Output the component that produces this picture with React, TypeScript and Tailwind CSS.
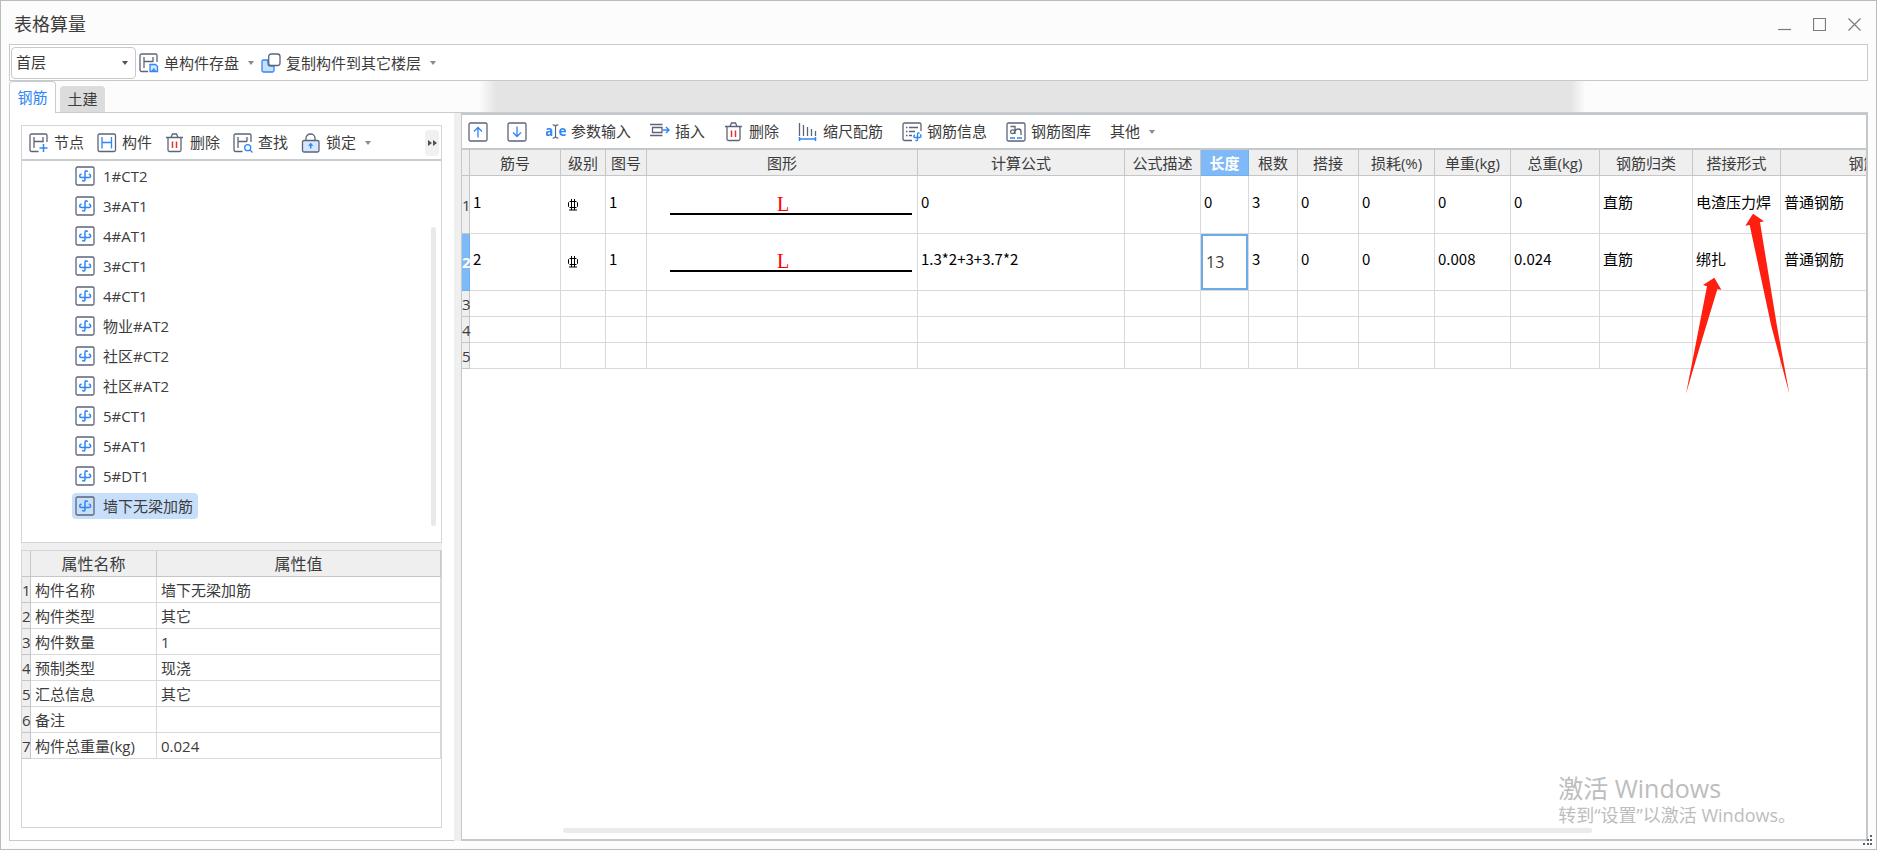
import React from "react";
import clsx from "clsx";

const components = [
  "1#CT2",
  "3#AT1",
  "4#AT1",
  "3#CT1",
  "4#CT1",
  "物业#AT2",
  "社区#CT2",
  "社区#AT2",
  "5#CT1",
  "5#AT1",
  "5#DT1",
  "墙下无梁加筋",
];

const properties = [
  ["构件名称", "墙下无梁加筋"],
  ["构件类型", "其它"],
  ["构件数量", "1"],
  ["预制类型", "现浇"],
  ["汇总信息", "其它"],
  ["备注", ""],
  ["构件总重量(kg)", "0.024"],
];

const columns = [
  { title: "筋号", width: "w-[91px]" },
  { title: "级别", width: "w-[45px]" },
  { title: "图号", width: "w-[41px]" },
  { title: "图形", width: "w-[271px]" },
  { title: "计算公式", width: "w-[207px]" },
  { title: "公式描述", width: "w-[76px]" },
  { title: "长度", width: "w-[48px]" },
  { title: "根数", width: "w-[49px]" },
  { title: "搭接", width: "w-[61px]" },
  { title: "损耗(%)", width: "w-[76px]" },
  { title: "单重(kg)", width: "w-[76px]" },
  { title: "总重(kg)", width: "w-[89px]" },
  { title: "钢筋归类", width: "w-[93px]" },
  { title: "搭接形式", width: "w-[88px]" },
  { title: "钢筋", width: "w-[166px]" },
];

interface Rebar {
  no: string;
  figure: string;
  formula: string;
  note: string;
  length: string;
  count: string;
  lap: string;
  loss: string;
  unit: string;
  total: string;
  kind: string;
  joint: string;
  type: string;
}

const rebars: Rebar[] = [
  {
    no: "1",
    figure: "1",
    formula: "0",
    note: "",
    length: "0",
    count: "3",
    lap: "0",
    loss: "0",
    unit: "0",
    total: "0",
    kind: "直筋",
    joint: "电渣压力焊",
    type: "普通钢筋",
  },
  {
    no: "2",
    figure: "1",
    formula: "1.3*2+3+3.7*2",
    note: "",
    length: "13",
    count: "3",
    lap: "0",
    loss: "0",
    unit: "0.008",
    total: "0.024",
    kind: "直筋",
    joint: "绑扎",
    type: "普通钢筋",
  },
];

const DARK = "#5c6478";
const BLUE = "#2f86f6";

function Icon({ children }: { children: React.ReactNode }) {
  return (
    <svg
      viewBox="0 0 20 20"
      className="h-5 w-5 shrink-0"
      fill="none"
      stroke={DARK}
      strokeWidth="1.3"
      aria-hidden="true"
    >
      {children}
    </svg>
  );
}

function SaveUnitIcon() {
  return (
    <Icon>
      <path d="M9 18.500H2.500A1.500 1.500 0 0 1 1 17V2.500A1.500 1.500 0 0 1 2.500 1h14A1.500 1.500 0 0 1 18 2.500V9" />
      <path d="M5 4v11M14 4v5M5 8.500h9" />
      <path d="M11 11.500h5.500l2 2v5h-7.500z" fill="#d5e7fd" stroke={BLUE} />
      <path d="M13 18.500l1.800-2.500 1.700 2.500" stroke={BLUE} />
    </Icon>
  );
}

function CopyIcon() {
  return (
    <Icon>
      <path
        d="M6.500 7H2.500A1.500 1.500 0 0 0 1 8.500v9A1.500 1.500 0 0 0 2.500 19h9a1.500 1.500 0 0 0 1.500-1.500V13H9a2 2 0 0 1-2-2z"
        fill="#c9e0fc"
        stroke={BLUE}
      />
      <rect x="7.700" y="1" width="11.300" height="11.500" rx="2.500" fill="#fff" />
    </Icon>
  );
}

function NodeIcon() {
  return (
    <Icon>
      <path d="M9.500 18.500H2.500A1.500 1.500 0 0 1 1 17V2.500A1.500 1.500 0 0 1 2.500 1h14A1.500 1.500 0 0 1 18 2.500V9" />
      <path d="M5 4v11M14 4v5.500M5 8.500h9" />
      <path d="M14.500 11v8M10.500 15h8" stroke={BLUE} strokeWidth="1.500" />
    </Icon>
  );
}

function ComponentIcon() {
  return (
    <Icon>
      <rect x="1" y="1" width="17.500" height="17.500" rx="1.500" />
      <path d="M5 4v11.500M14.500 4v11.500M5 9.500h9.500" stroke={BLUE} />
    </Icon>
  );
}

function TrashIcon() {
  return (
    <Icon>
      <path d="M1 4.500h17M6 4.500l1.500-3.500h4l1.500 3.500M3 4.500V17a1.500 1.500 0 0 0 1.500 1.500h10A1.500 1.500 0 0 0 16 17V4.500" />
      <path d="M7.500 8.500V15M11.500 8.500V15" stroke="#e5322d" strokeWidth="1.500" />
    </Icon>
  );
}

function FindIcon() {
  return (
    <Icon>
      <path d="M9.500 18.500H2.500A1.500 1.500 0 0 1 1 17V2.500A1.500 1.500 0 0 1 2.500 1h14A1.500 1.500 0 0 1 18 2.500V9" />
      <path d="M5 4v11M14 4v4.500M5 8.500h9" />
      <circle cx="14.700" cy="14.700" r="3" stroke={BLUE} />
      <path d="M17 17l2.500 2.500" stroke={BLUE} />
    </Icon>
  );
}

function LockIcon() {
  return (
    <Icon>
      <path d="M5 8V5a4.500 4 0 0 1 9 0v3" />
      <rect x="1.500" y="7.500" width="16.500" height="11.500" rx="1.500" fill="#d5e7fd" />
      <path d="M9.700 15.500v-4" stroke={BLUE} strokeWidth="1.500" />
      <path d="M7.500 12.500l2.200-2.500 2.200 2.500z" fill={BLUE} stroke={BLUE} strokeWidth="0.500" />
    </Icon>
  );
}

function MoveIcon({ down }: { down?: boolean }) {
  return (
    <Icon>
      <rect x="1" y="1" width="18" height="18" rx="1.500" />
      <path
        d={down ? "M10 4.500v10M6 10.500l4 4 4-4" : "M10 15.500v-10M6 9.500l4-4 4 4"}
        stroke={BLUE}
      />
    </Icon>
  );
}

function ParamIcon() {
  return (
    <svg viewBox="0 0 21 20" className="h-5 w-5 shrink-0" aria-hidden="true">
      <text
        x="-1"
        y="14"
        fontSize="14"
        fontWeight="700"
        fontFamily="Open Sans, sans-serif"
        fill={BLUE}
      >
        a
      </text>
      <text
        x="13"
        y="14"
        fontSize="14"
        fontWeight="700"
        fontFamily="Open Sans, sans-serif"
        fill={BLUE}
      >
        e
      </text>
      <path
        d="M7 2.500c2 0 3 .5 3 2v10c0 1.500-1 2-3 2M13 2.500c-2 0-3 .5-3 2M13 16.500c-2 0-3-.5-3-2"
        fill="none"
        stroke={DARK}
        strokeWidth="1.200"
      />
    </svg>
  );
}

function InsertIcon() {
  return (
    <Icon>
      <path d="M0 2.500h12.500M0 13.500h12.500M2.500 5.500h9.500v5H2.500z" />
      <path d="M13 8h5.500M16 5l3 3-3 3" stroke={BLUE} strokeWidth="1.400" />
    </Icon>
  );
}

function ScaleIcon() {
  return (
    <Icon>
      <path d="M1.500 1v13M5.500 3v11M9.500 5v9M13.500 7v7M17.500 9v5" />
      <path d="M1.500 17h16M1.500 15v4M17.500 15v4" stroke={BLUE} strokeWidth="1.500" />
    </Icon>
  );
}

function InfoIcon() {
  return (
    <Icon>
      <path d="M10 18.500H2.500A1.500 1.500 0 0 1 1 17V2.500A1.500 1.500 0 0 1 2.500 1h15A1.500 1.500 0 0 1 19 2.500V9" />
      <path d="M4 5.500h1.500M7 5.500h9M4 9.500h1.500M7 9.500h6M4 13.500h1.500M7 13.500h3" />
      <path
        d="M17.500 11.500c-.5-1-2-.8-2 .5v5.500c0 1.300-1.500 1.500-2 .5M13 13c-1.500.5-1.500 2.500 0 2.500h4.500c2 0 2-2.500.5-2.800"
        stroke={BLUE}
        strokeWidth="1.400"
      />
    </Icon>
  );
}

function LibraryIcon() {
  return (
    <Icon>
      <rect x="1" y="1" width="18" height="18" rx="1.500" />
      <path d="M4.500 4.500H9v7.500M9 9.500C8 7 4.500 7.500 4.500 9.800S8 12.500 9 9.500c.5-2 1.500-2.500 3.500-2.500s2.500 1 2.500 2.500v3.500" />
      <path d="M4 16h5M11 16h5" stroke={BLUE} strokeWidth="1.500" />
    </Icon>
  );
}

function TreeIcon() {
  return (
    <Icon>
      <rect x="1" y="1" width="18" height="18" rx="1.500" />
      <path
        d="M12.500 6c-.3-1.800-2.500-1.800-2.500 0v7.500c0 2-2 2-2.500.5M6.500 8c-2.500.8-2.500 3.500 0 3.500h7c2.800 0 2.800-3 .3-3.500"
        stroke={BLUE}
        strokeWidth="1.500"
      />
    </Icon>
  );
}

// HRB400 grade mark
function GradeMark() {
  return (
    <svg
      viewBox="0 0 12 12"
      className="h-3 w-3"
      fill="none"
      stroke="#000"
      role="img"
      aria-label="HRB400"
    >
      <path d="M3 2.500h6M3 8.500h6M1.500 3.500v4M10.500 3.500v4M2.500 2.500l-1 1M9.500 2.500l1 1M1.500 7.500l1 1M10.500 7.500l-1 1" />
      <path d="M4.500 0v11M7.500 0v11M2 11h8" />
    </svg>
  );
}

function Caret() {
  return (
    <svg viewBox="0 0 6 4" className="h-1 w-1.5 shrink-0" aria-hidden="true">
      <path d="M0 0h6L3 4z" fill="#858a93" />
    </svg>
  );
}

interface ToolProps {
  icon?: React.ReactNode;
  label: string;
  caret?: boolean;
}

function Tool({ icon, label, caret }: ToolProps) {
  return (
    <button type="button" className="flex shrink-0 items-center gap-[5px]">
      {icon}
      <span className="whitespace-nowrap">{label}</span>
      {caret && (
        <span className="pl-1">
          <Caret />
        </span>
      )}
    </button>
  );
}

function TitleBar() {
  return (
    <header className="flex h-[43px] shrink-0 items-center justify-between pl-[13px] pr-1">
      <h1 className="pt-1 text-[18px]">表格算量</h1>
      <div className="flex text-[#7b7b7b]">
        {[
          { name: "最小化", d: "M0 11.500h13" },
          { name: "最大化", d: "M.5.5h12v12H.5z" },
          { name: "关闭", d: "M.5.5l12 12M12.500.5l-12 12" },
        ].map((b) => (
          <button
            key={b.name}
            type="button"
            aria-label={b.name}
            className="flex h-8 w-[35px] items-center justify-center pt-1"
          >
            <svg
              viewBox="0 0 13 13"
              className="h-[13px] w-[13px]"
              fill="none"
              stroke="currentColor"
              strokeWidth="1.200"
            >
              <path d={b.d} />
            </svg>
          </button>
        ))}
      </div>
    </header>
  );
}

function TopToolbar() {
  return (
    <div className="flex h-[37px] shrink-0 items-center gap-[3px] border border-[#c5cacf] bg-white px-px">
      <div className="relative">
        <select
          aria-label="楼层"
          className="h-8 w-[125px] appearance-none rounded border border-[#c8c8c8] bg-white pl-1"
        >
          <option>首层</option>
        </select>
        <svg
          viewBox="0 0 6 4"
          className="pointer-events-none absolute right-2 top-3.5 h-1 w-1.5"
          aria-hidden="true"
        >
          <path d="M0 0h6L3 4z" fill="#4b5160" />
        </svg>
      </div>
      <div className="flex gap-[7px] pt-px">
        <Tool icon={<SaveUnitIcon />} label="单构件存盘" caret />
        <Tool icon={<CopyIcon />} label="复制构件到其它楼层" caret />
      </div>
    </div>
  );
}

function Tabs() {
  return (
    <div
      role="tablist"
      className="flex h-8 shrink-0 items-end gap-1 border-b border-[#c8ccd0] bg-[linear-gradient(to_right,transparent_25.3%,#e4e4e4_26.2%,#e4e4e4_84%,transparent_84.8%)]"
    >
      <button
        type="button"
        role="tab"
        aria-selected="true"
        className="-mb-px h-8 w-[47px] rounded-t border border-b-0 border-[#c8ccd0] bg-white text-[#2f86f6]"
      >
        钢筋
      </button>
      <button
        type="button"
        role="tab"
        aria-selected="false"
        className="h-[26px] w-[45px] rounded-t bg-[#dcdcdc]"
      >
        土建
      </button>
    </div>
  );
}

function ComponentTree() {
  return (
    <section className="border border-[#d3d5d7] bg-white">
      <div className="flex h-[35px] items-center border-b-2 border-[#c8ccd0] pl-[7px] pr-0.5">
        <div className="flex flex-1 gap-[13px]">
          <Tool icon={<NodeIcon />} label="节点" />
          <Tool icon={<ComponentIcon />} label="构件" />
          <Tool icon={<TrashIcon />} label="删除" />
          <Tool icon={<FindIcon />} label="查找" />
          <Tool icon={<LockIcon />} label="锁定" caret />
        </div>
        <button
          type="button"
          aria-label="更多"
          className="flex h-[26px] w-3.5 items-center justify-center rounded bg-[#f1f1f1]"
        >
          <svg viewBox="0 0 9 6" className="h-1.5 w-[9px]" fill="#4b5160">
            <path d="M0 0l4 3-4 3zM5 0l4 3-4 3z" />
          </svg>
        </button>
      </div>
      <div className="flex h-[381px] justify-between pr-[5px]">
        <ul>
          {components.map((name, i) => (
            <li key={name} className="flex h-[30px] items-center pl-[50px]">
              <button
                type="button"
                className={clsx(
                  "flex h-[26px] items-center gap-2 rounded-sm pl-[3px] pr-[5px]",
                  i === components.length - 1 && "bg-[#c7dffa]"
                )}
              >
                <TreeIcon />
                <span>{name}</span>
              </button>
            </li>
          ))}
        </ul>
        <div className="mb-4 mt-[66px] w-[5px] rounded-full bg-[#e9e9e9]"></div>
      </div>
    </section>
  );
}

function PropertyTable() {
  return (
    <section className="min-h-0 flex-1 border border-[#d3d5d7] bg-white">
      <table className="w-full table-fixed border-separate border-spacing-0 leading-5">
        <thead>
          <tr className="h-[26px] bg-[#efefef] text-base leading-5">
            <th className="w-[9px] border-b border-r border-[#c6c6c6] p-0"></th>
            <th className="w-[126px] border-b border-r border-[#c6c6c6] p-0 font-normal">
              属性名称
            </th>
            <th className="border-b border-r border-[#c6c6c6] p-0 font-normal">属性值</th>
          </tr>
        </thead>
        <tbody>
          {properties.map(([name, value], i) => (
            <tr key={name} className="h-[26px]">
              <th className="border-b border-r border-[#c6c6c6] bg-[#efefef] p-0 font-normal">
                {i + 1}
              </th>
              <td className="border-b border-r border-[#d9d9d9] py-0 pl-1">{name}</td>
              <td className="border-b border-r border-[#d9d9d9] py-0 pl-1">{value}</td>
            </tr>
          ))}
        </tbody>
      </table>
    </section>
  );
}

function Cell({ children }: { children?: React.ReactNode }) {
  return (
    <td className="whitespace-nowrap border-b border-r border-[#d9d9d9] pb-1.5 pl-[3px]">
      {children}
    </td>
  );
}

function RebarRow({ rebar, editing }: { rebar: Rebar; editing: boolean }) {
  return (
    <tr
      className={clsx(
        "font-['Noto_Sans_CJK_SC',sans-serif] text-black",
        editing ? "h-[57px]" : "h-[58px]"
      )}
    >
      <th
        className={clsx(
          "border-b border-r p-0 font-['Open_Sans',sans-serif]",
          editing
            ? "border-[#6fb0f0] bg-[#7fb9f8] font-bold text-white"
            : "border-[#c6c6c6] bg-[#efefef] font-normal text-[#3c3c3c]"
        )}
      >
        {rebar.no}
      </th>
      <Cell>{rebar.no}</Cell>
      <td className="border-b border-r border-[#d9d9d9] pl-1.5">
        <GradeMark />
      </td>
      <Cell>{rebar.figure}</Cell>
      <td className="border-b border-r border-[#d9d9d9] pl-[23px] pr-[5px]">
        <div className="border-b-2 border-black pr-4 text-center font-['Liberation_Serif',serif] text-[20px] leading-[18px] text-[#f00]">
          L
        </div>
      </td>
      <Cell>{rebar.formula}</Cell>
      <Cell>{rebar.note}</Cell>
      {editing ? (
        <td className="border-b border-r border-[#d9d9d9] p-0">
          <input
            aria-label="长度"
            defaultValue={rebar.length}
            className="block h-14 w-full border-2 border-[#6cabe9] bg-white pl-[3px] font-['Open_Sans',sans-serif] text-base text-[#3c3c3c] outline-none"
          />
        </td>
      ) : (
        <Cell>{rebar.length}</Cell>
      )}
      <Cell>{rebar.count}</Cell>
      <Cell>{rebar.lap}</Cell>
      <Cell>{rebar.loss}</Cell>
      <Cell>{rebar.unit}</Cell>
      <Cell>{rebar.total}</Cell>
      <Cell>{rebar.kind}</Cell>
      <Cell>{rebar.joint}</Cell>
      <Cell>{rebar.type}</Cell>
    </tr>
  );
}

function RebarTable() {
  return (
    <div className="relative min-h-0 flex-1 overflow-hidden">
      <table className="w-[1485px] table-fixed border-separate border-spacing-0 leading-5">
        <thead>
          <tr className="h-[26px] bg-[#efefef]">
            <th className="w-2 border-b border-r border-[#c6c6c6] p-0"></th>
            {columns.map((col) => (
              <th
                key={col.title}
                className={clsx(
                  "whitespace-nowrap border-b border-r p-0",
                  col.width,
                  col.title === "长度"
                    ? "border-[#6fb0f0] bg-[#7fb9f8] font-bold text-white"
                    : "border-[#c6c6c6] font-normal"
                )}
              >
                {col.title}
              </th>
            ))}
          </tr>
        </thead>
        <tbody>
          {rebars.map((rebar) => (
            <RebarRow key={rebar.no} rebar={rebar} editing={rebar.no === "2"} />
          ))}
          {[3, 4, 5].map((n) => (
            <tr key={n} className="h-[26px]">
              <th className="border-b border-r border-[#c6c6c6] bg-[#efefef] p-0 font-normal">
                {n}
              </th>
              {columns.map((col) => (
                <td key={col.title} className="border-b border-r border-[#d9d9d9]"></td>
              ))}
            </tr>
          ))}
        </tbody>
      </table>
      {/* marker arrows over the joint column */}
      <svg
        viewBox="940 340 330 546"
        className="pointer-events-none absolute left-[1221px] top-[63px] h-[182px] w-[110px]"
        fill="#ff1f10"
        aria-hidden="true"
      >
        <path d="M1150 342l33 23-12 3 51 312 37 202-54-202-65-304-13 2z" />
        <path d="M1034 534l21 36-12-1-58 191-36 122 24-122 39-200-12-4z" />
      </svg>
    </div>
  );
}

function RebarPanel() {
  return (
    <section className="flex min-w-0 flex-1 flex-col border-2 border-l border-[#c3c8cc] bg-white">
      <div className="flex h-[35px] shrink-0 items-center gap-[19px] border-b-2 border-[#c3c8cc] pl-1.5">
        <button type="button" aria-label="上移">
          <MoveIcon />
        </button>
        <button type="button" aria-label="下移">
          <MoveIcon down />
        </button>
        <Tool icon={<ParamIcon />} label="参数输入" />
        <Tool icon={<InsertIcon />} label="插入" />
        <Tool icon={<TrashIcon />} label="删除" />
        <Tool icon={<ScaleIcon />} label="缩尺配筋" />
        <Tool icon={<InfoIcon />} label="钢筋信息" />
        <Tool icon={<LibraryIcon />} label="钢筋图库" />
        <Tool label="其他" caret />
      </div>
      <RebarTable />
      <div className="mb-1.5 ml-[101px] mr-[19.500%] h-[5px] shrink-0 rounded-full bg-[#ebebeb]"></div>
    </section>
  );
}

export default function App() {
  return (
    <div className="relative flex h-screen flex-col overflow-hidden border border-[#bbbbbb] bg-[#fcfcfc] font-['Open_Sans','Noto_Sans_CJK_SC',sans-serif] text-[15px] text-[#3c3c3c]">
      <TitleBar />
      <main className="mx-2 mb-2 flex min-h-0 flex-1 flex-col">
        <TopToolbar />
        <Tabs />
        <div className="flex min-h-0 flex-1">
          <div className="flex w-[445px] shrink-0 border-b border-l border-[#c5cacf] bg-white pb-3 pl-[11px] pr-3 pt-3">
            <div className="flex min-w-0 flex-1 flex-col gap-[7px] bg-[#efefef]">
              <ComponentTree />
              <PropertyTable />
            </div>
          </div>
          <div className="w-[7px] shrink-0 bg-[#efefef]"></div>
          <RebarPanel />
        </div>
      </main>
      <div className="pointer-events-none absolute bottom-[22px] right-20 text-[#bdbdbd]">
        <p className="text-[25px] leading-[30px]">激活 Windows</p>
        <p className="text-[18px] leading-6">转到“设置”以激活 Windows。</p>
      </div>
      <svg
        viewBox="0 0 10 10"
        className="absolute bottom-1 right-[3px] h-2.5 w-2.5"
        fill="#5c6068"
        aria-hidden="true"
      >
        <path d="M7 0h2v2H7zM4 4h2v2H4zM7 4h2v2H7zM0 8h2v2H0zM4 8h2v2H4zM7 8h2v2H7z" />
      </svg>
    </div>
  );
}
